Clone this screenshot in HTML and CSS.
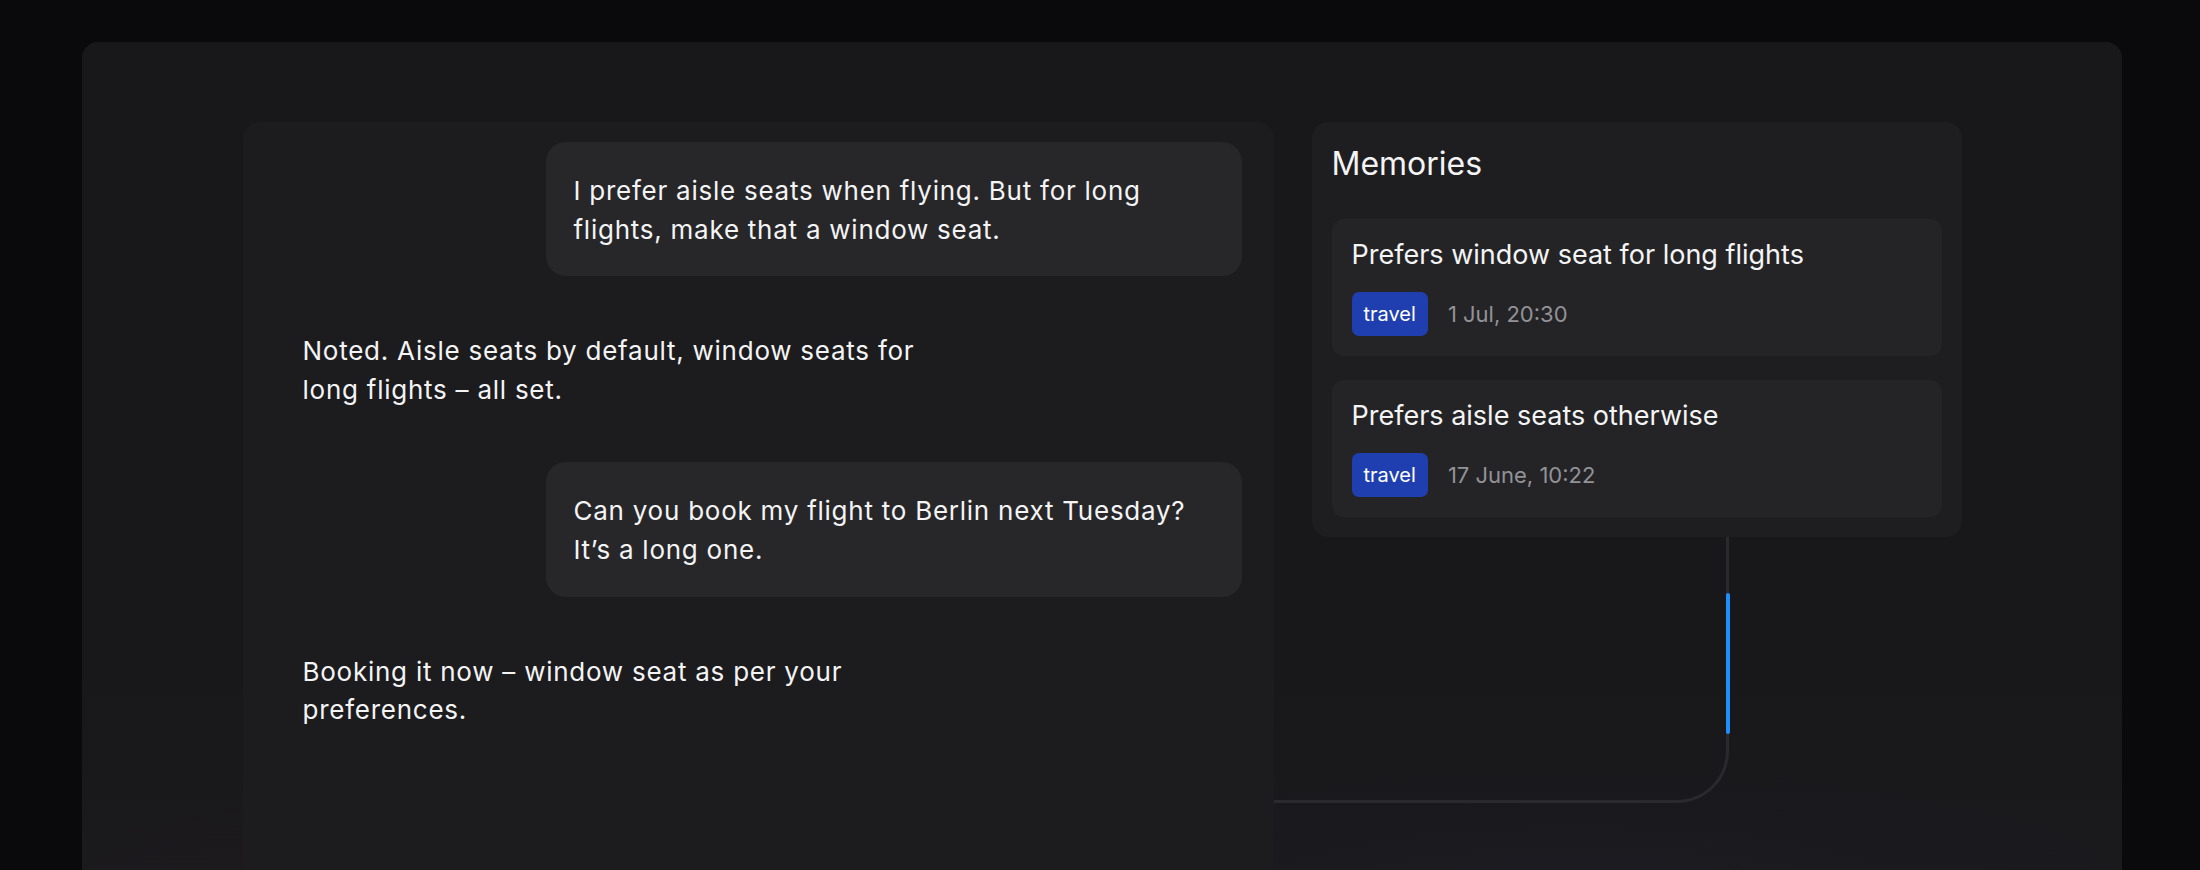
FILE: index.html
```html
<!DOCTYPE html>
<html lang="en">
<head>
<meta charset="utf-8">
<title>Chat with memories</title>
<link rel="stylesheet" href="styles.css">
</head>
<body>
<div class="stage">
  <div class="connector"><span class="connector-active"></span></div>
  <section class="chat">
    <div class="msg msg-user">I prefer aisle seats when flying. But for long flights, make that a window seat.</div>
    <div class="msg msg-bot">Noted. Aisle seats by default, window seats for long flights – all set.</div>
    <div class="msg msg-user">Can you book my flight to Berlin next Tuesday? It’s a long one.</div>
    <div class="msg msg-bot">Booking it now – window seat as per your preferences.</div>
  </section>
  <aside class="memories">
    <h2 class="memories-title">Memories</h2>
    <div class="memory-list">
      <div class="memory-card">
        <div class="memory-text">Prefers window seat for long flights</div>
        <div class="memory-meta"><span class="tag">travel</span><span class="date">1 Jul, 20:30</span></div>
      </div>
      <div class="memory-card">
        <div class="memory-text">Prefers aisle seats otherwise</div>
        <div class="memory-meta"><span class="tag">travel</span><span class="date">17 June, 10:22</span></div>
      </div>
    </div>
  </aside>
</div>
</body>
</html>
```
FILE: styles.css
```css
* { box-sizing: border-box; }

html, body {
  margin: 0;
  height: 870px;
  overflow: hidden;
}

body {
  background: #0a0a0c;
  font-family: Inter, "Noto Sans", sans-serif;
  color: #f4f4f5;
}

.stage {
  position: relative;
  margin: 42px 0 0 82px;
  width: 2040px;
  height: 900px;
  background:
    radial-gradient(ellipse 500px 120px at 400px 860px, rgba(60, 30, 40, 0.18), transparent),
    radial-gradient(ellipse 600px 140px at 1500px 860px, rgba(30, 35, 60, 0.16), transparent),
    linear-gradient(180deg, #18181b 0%, #18181b 70%, #1b1a1d 100%);
  border-radius: 16px;
  display: flex;
  justify-content: center;
  align-items: flex-start;
  gap: 38px;
  padding-top: 80px;
}

.connector {
  position: absolute;
  left: 1000px;
  top: 460px;
  width: 647px;
  height: 301px;
  border-right: 3px solid #2a2a2e;
  border-bottom: 3px solid #2a2a2e;
  border-bottom-right-radius: 52px;
  z-index: 0;
}

.connector-active {
  position: absolute;
  right: -3.5px;
  top: 91px;
  width: 4px;
  height: 141px;
  border-radius: 2px;
  background: #1d8fff;
}

.chat {
  position: relative;
  z-index: 1;
  width: 1031px;
  min-height: 820px;
  background: #1c1c1f;
  border-radius: 16px;
  padding: 20px 32px;
  display: flex;
  flex-direction: column;
  gap: 26px;
}

.msg {
  max-width: 696px;
  font-size: 26px;
  line-height: 38.6px;
  letter-spacing: 0.75px;
  padding: 30px 28px 27px;
}

.msg-user {
  align-self: flex-end;
  background: #27272a;
  border-radius: 20px;
}

.msg-bot {
  align-self: flex-start;
}

.memories {
  position: relative;
  z-index: 1;
  width: 650px;
  background: #1e1e21;
  border-radius: 16px;
  padding: 20px;
}

.memories-title {
  margin: 0 0 33px;
  font-size: 32px;
  line-height: 44px;
  font-weight: 400;
}

.memory-list {
  display: flex;
  flex-direction: column;
  gap: 24px;
}

.memory-card {
  background: #242427;
  border-radius: 12px;
  padding: 18px 20px 20px;
}

.memory-text {
  font-size: 27px;
  line-height: 36px;
}

.memory-meta {
  margin-top: 19px;
  display: flex;
  align-items: center;
  gap: 20px;
}

.tag {
  background: #1f3fb0;
  color: #ffffff;
  font-size: 20px;
  line-height: 28px;
  padding: 8px 12px;
  border-radius: 7px;
}

.date {
  color: #929297;
  font-size: 22px;
  line-height: 28px;
}
```
